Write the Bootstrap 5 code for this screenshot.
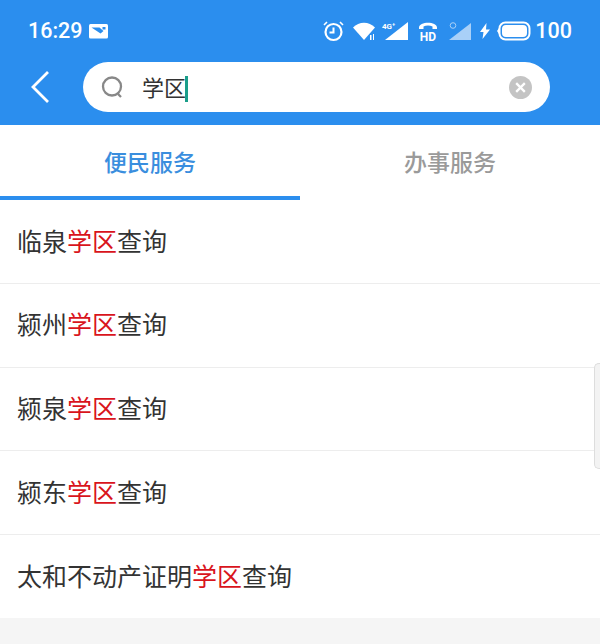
<!DOCTYPE html>
<html lang="zh">
<head>
<meta charset="utf-8">
<title>学区</title>
<link href="https://cdn.jsdelivr.net/npm/bootstrap@5.3.0/dist/css/bootstrap.min.css" rel="stylesheet">
<style>
html,body{height:644px;overflow:hidden}
body{background:#f5f5f5;font-family:"Noto Sans CJK SC","Liberation Sans",sans-serif;position:relative}
.topbar{background:#2b8eee;height:125px;color:#fff}
.statusline{height:62px;padding:0 28px;font-family:Roboto,sans-serif;font-size:21.5px;font-weight:500}
.mailglyph{margin-left:6px}
.statusline svg{overflow:visible;display:block}
.gapa{margin-left:9px}.gapb{margin-left:7px}.gapc{margin-left:11px}.gapd{margin-left:12px}.gape{margin-left:9px}.gapf{margin-left:7px}.gapg{margin-left:4px}
.searchrow{height:50px;padding-left:29px}
.backbtn{width:26px;height:38px;margin-right:28px}
.searchpill{width:467px;height:50px;border-radius:25px;background:#fff;padding:0 18px}
.searchtext{font-size:22px;color:#333;margin-left:17px;line-height:48px;height:50px}
.caretbar{display:inline-block;width:3px;height:26px;background:#1a9e8a;vertical-align:-6px;margin-left:-1px}
.tabcell{height:75px;font-size:23px;font-weight:500;color:#9a9a9a;background:#fff;width:300px;border-bottom:4px solid transparent;padding-top:1px}
.tabcell.onpage{color:#3a8ede;border-bottom-color:#2b8eee}
.rowitem{height:83.75px;background:#fff;border-bottom:1px solid #ededed;padding:0 0 2px 17px;font-size:25px;color:#333}
.rowitem:last-child{border-bottom:0;height:83px}
.rowitem em{font-style:normal;color:#d9141c}
.edgehandle{position:absolute;right:0;top:363px;width:6px;height:106px;background:#f3f3f3;border:1px solid #ddd;border-right:0;border-radius:5px 0 0 5px}
</style>
</head>
<body>
<div class="topbar">
  <div class="statusline d-flex align-items-center justify-content-between">
    <div class="d-flex align-items-center">
      <span>16:29</span>
      <svg class="mailglyph" width="19" height="15" viewBox="0 0 19 15"><rect x="0" y="0" width="19" height="14.500" rx="1.500" fill="#fff"/><path d="M2.500 3.500h8l4 3.500-3 2.500z" fill="#2b8eee"/><path d="M13.500 3h3v2.500h-3z" fill="#2b8eee"/></svg>
    </div>
    <div class="d-flex align-items-center">
      <svg width="21" height="22" viewBox="0 0 21 22" fill="none" stroke="#fff" stroke-width="2.200"><circle cx="10.500" cy="12" r="8"/><path d="M10.500 7.500V12.500H6.500" stroke-width="2"/><path d="M1 5l3-3M20 5l-3-3" stroke-width="1.600"/></svg>
      <svg class="gapa" width="22" height="19" viewBox="0 0 22 19"><path d="M0 5.500C6 -1 16 -1 22 5.500L11 18z" fill="#fff"/><path d="M17 13h1.500v5H17zM20 12h1v6h-1z" fill="#fff"/></svg>
      <svg class="gapb" width="26" height="21" viewBox="0 0 26 21"><path d="M26 1V19H3z" fill="#fff"/><text x="0" y="8" font-size="8" font-weight="700" fill="#fff" font-family="Roboto,sans-serif">4G⁺</text></svg>
      <svg class="gapc" width="18" height="21" viewBox="0 0 18 21"><path d="M0 6.500C0 0 18 0 18 6.500V8H13.500V5.500C11 4.100 7 4.100 4.500 5.500V8H0z" fill="#fff"/><text x="9" y="20" text-anchor="middle" font-size="12" font-weight="700" fill="#fff" font-family="Roboto,sans-serif">HD</text></svg>
      <svg class="gapd" width="22" height="19" viewBox="0 0 22 19"><path d="M22 1V18H0z" fill="#a9d0f8"/><circle cx="4" cy="3.500" r="2.800" fill="none" stroke="#a9d0f8"/></svg>
      <svg class="gape" width="10" height="16" viewBox="0 0 10 16"><path d="M6.500 0L0 9h3.500L2.500 16 10 6.500H6z" fill="#fff"/></svg>
      <svg class="gapf" width="34" height="20" viewBox="0 0 34 20" fill="none"><rect x="2.500" y="1.500" width="30" height="17" rx="6" stroke="#fff" stroke-width="2"/><rect x="5" y="4" width="25" height="12" rx="4" fill="#fff"/><path d="M0 10l2-3v6z" fill="#fff"/></svg>
      <span class="gapg">100</span>
    </div>
  </div>
  <div class="searchrow d-flex align-items-center">
    <div class="backbtn d-flex align-items-center">
      <svg width="22" height="34" viewBox="0 0 22 34" fill="none" stroke="#fff" stroke-width="2.800"><path d="M19 2L4 17l15 15"/></svg>
    </div>
    <div class="searchpill d-flex align-items-center">
      <svg width="24" height="24" viewBox="0 0 24 24" fill="none" stroke="#888" stroke-width="2.300"><circle cx="11" cy="11.500" r="9"/><path d="M17 19l3 3"/></svg>
      <span class="searchtext flex-grow-1">学区<span class="caretbar"></span></span>
      <svg width="23" height="23" viewBox="0 0 24 24"><circle cx="12" cy="12" r="12" fill="#c4c4c4"/><path d="M7.500 7.500l9 9M16.500 7.500l-9 9" stroke="#fff" stroke-width="2.400"/></svg>
    </div>
  </div>
</div>
<div class="d-flex">
  <div class="tabcell onpage d-flex align-items-center justify-content-center">便民服务</div>
  <div class="tabcell d-flex align-items-center justify-content-center">办事服务</div>
</div>
<div class="d-flex flex-column">
  <div class="rowitem d-flex align-items-center"><span>临泉<em>学区</em>查询</span></div>
  <div class="rowitem d-flex align-items-center"><span>颍州<em>学区</em>查询</span></div>
  <div class="rowitem d-flex align-items-center"><span>颍泉<em>学区</em>查询</span></div>
  <div class="rowitem d-flex align-items-center"><span>颍东<em>学区</em>查询</span></div>
  <div class="rowitem d-flex align-items-center"><span>太和不动产证明<em>学区</em>查询</span></div>
</div>
<div class="edgehandle"></div>
<script src="https://cdn.jsdelivr.net/npm/bootstrap@5.3.0/dist/js/bootstrap.bundle.min.js"></script>
</body>
</html>
